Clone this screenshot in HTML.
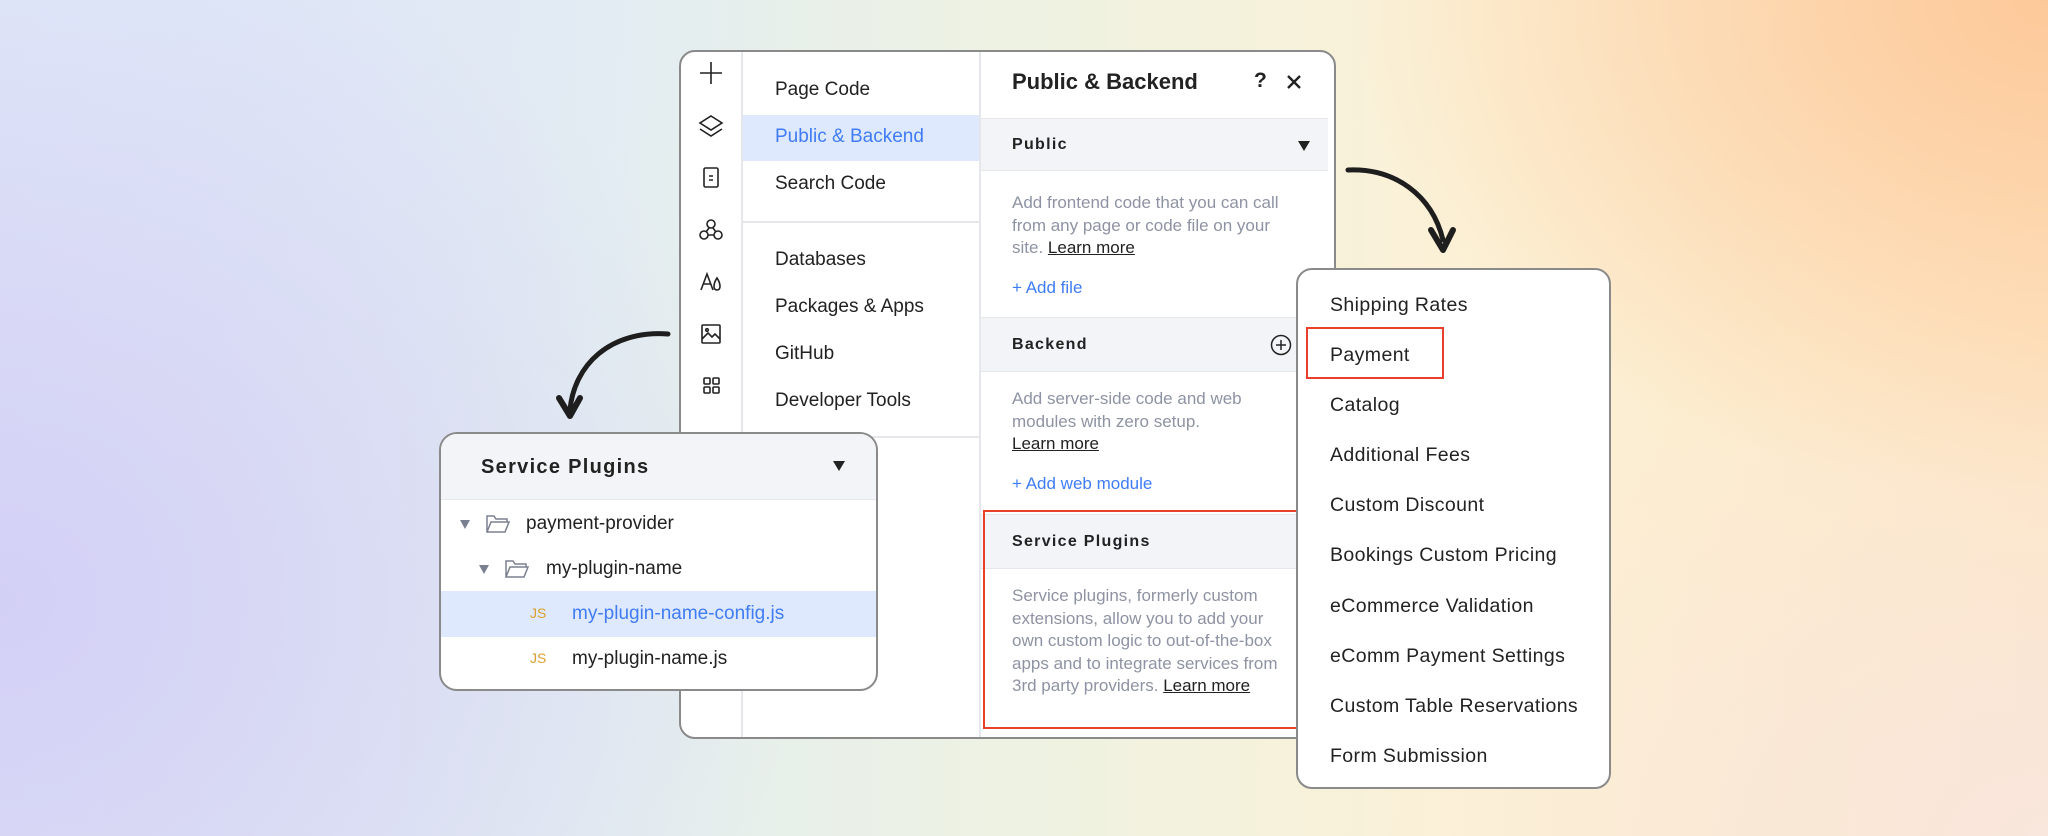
<!DOCTYPE html>
<html><head><meta charset="utf-8"><style>
*{margin:0;padding:0;box-sizing:border-box}
body{width:2048px;height:836px;overflow:hidden;position:relative;font-family:"Liberation Sans",sans-serif;
background:
radial-gradient(ellipse 700px 500px at 2048px 0px,#fdc99a 0%,rgba(253,205,160,0) 100%),
radial-gradient(ellipse 800px 700px at 0px 600px,#d3d0f6 0%,rgba(211,208,246,0) 100%),
radial-gradient(ellipse 700px 500px at 100px 0px,#dfe7f8 0%,rgba(223,231,248,0) 100%),
radial-gradient(ellipse 700px 500px at 2048px 836px,#f9e6dc 0%,rgba(249,230,220,0) 100%),
linear-gradient(90deg,#dfe3f4 0%,#e4eef0 30%,#eef2e2 50%,#fcf1d6 72%,#fde7c6 100%);}
.a{position:absolute}
.panel{position:absolute;background:#fff;border:2px solid #8a8a8a;border-radius:16px;overflow:hidden}
.nav{position:absolute;left:94px;font-size:19px;color:#222}
.t{position:absolute;font-size:17px;color:#8e93a3;line-height:22.5px}
.u{color:#222;text-decoration:underline}
.blue{color:#3f7cf5}
.band{position:absolute;background:#f3f4f7;border-top:1.5px solid #e6e7ec;border-bottom:1.5px solid #e6e7ec}
.bh{position:absolute;font-weight:bold;font-size:16px;letter-spacing:1.3px;color:#222}
.tri{position:absolute;width:0;height:0;border-left:6px solid transparent;border-right:6px solid transparent;border-top:10px solid #222}
.li{position:absolute;left:32px;font-size:19.5px;color:#222;letter-spacing:0.4px}
</style></head><body>

<div class="panel" style="left:679px;top:50px;width:657px;height:689px">
  <div class="a" style="left:60px;top:0;width:1.5px;height:689px;background:#e6e7ec"></div>
  <div class="a" style="left:298px;top:0;width:1.5px;height:689px;background:#e6e7ec"></div>
  <svg class="a" style="left:14px;top:6px" width="32" height="400" viewBox="0 0 32 400" fill="none" stroke="#222" stroke-width="1.6">
    <path d="M16 4v22M5 15h22"/>
    <path d="M16 58l11 7-11 7-11-7z M5 71l11 7 11-7"/>
    <rect x="9" y="110" width="14" height="19" rx="1.5"/><path d="M14 118h4M14 122h4"/>
    <circle cx="16" cy="166" r="4"/><circle cx="9" cy="177" r="4"/><circle cx="23" cy="177" r="4"/><path d="M14 170l-3 4M18 170l3 4M13 177h6"/>
    <path d="M6 232l6-16 6 16M8 226h8M22 220c-4 6-4 12 0 12s4-6 0-12z"/>
    <rect x="7" y="267" width="18" height="18" rx="1"/><path d="M7 281l6-6 4 4 3-3 5 5"/><circle cx="12" cy="272" r="1.3"/>
    <rect x="9" y="320" width="6" height="6" rx="1"/><rect x="18" y="320" width="6" height="6" rx="1"/><rect x="9" y="329" width="6" height="6" rx="1"/><rect x="18" y="329" width="6" height="6" rx="1"/>
    <rect x="9" y="375" width="15" height="14" rx="1"/>
  </svg>
  <div class="a" style="left:62px;top:63px;width:236px;height:46px;background:#dfe9fd"></div>
  <div class="nav" style="top:27px">Page Code</div>
  <div class="nav blue" style="top:74px">Public &amp; Backend</div>
  <div class="nav" style="top:121px">Search Code</div>
  <div class="a" style="left:62px;top:169px;width:236px;height:1.5px;background:#e6e7ec"></div>
  <div class="nav" style="top:197px">Databases</div>
  <div class="nav" style="top:244px">Packages &amp; Apps</div>
  <div class="nav" style="top:291px">GitHub</div>
  <div class="nav" style="top:338px">Developer Tools</div>
  <div class="a" style="left:62px;top:384px;width:236px;height:1.5px;background:#e6e7ec"></div>
  <div class="a" style="left:331px;top:17px;font-size:22px;font-weight:bold;color:#222">Public &amp; Backend</div>
  <div class="a" style="left:573px;top:17px;font-size:21px;font-weight:bold;color:#222">?</div>
  <svg class="a" style="left:605px;top:22px" width="16" height="16"><path d="M2 2l12 12M14 2L2 14" stroke="#222" stroke-width="2.4"/></svg>
  <div class="band" style="left:300px;top:66px;width:347px;height:53px"></div>
  <div class="bh" style="left:331px;top:84px">Public</div>
  <div class="tri" style="left:617px;top:89px"></div>
  <div class="t" style="left:331px;top:140px">Add frontend code that you can call<br>from any page or code file on your<br>site. <span class="u">Learn more</span></div>
  <div class="t blue" style="left:331px;top:225px;font-size:17px">+ Add file</div>
  <div class="band" style="left:300px;top:265px;width:347px;height:55px"></div>
  <div class="bh" style="left:331px;top:284px">Backend</div>
  <svg class="a" style="left:588px;top:281px" width="24" height="24"><circle cx="12" cy="12" r="9.5" fill="none" stroke="#222" stroke-width="1.5"/><path d="M12 7v10M7 12h10" stroke="#222" stroke-width="1.5"/></svg>
  <div class="t" style="left:331px;top:336px">Add server-side code and web<br>modules with zero setup.<br><span class="u">Learn more</span></div>
  <div class="t blue" style="left:331px;top:421px">+ Add web module</div>
  <div class="band" style="left:300px;top:462px;width:347px;height:55px"></div>
  <div class="bh" style="left:331px;top:481px">Service Plugins</div>
  <div class="t" style="left:331px;top:533px">Service plugins, formerly custom<br>extensions, allow you to add your<br>own custom logic to out-of-the-box<br>apps and to integrate services from<br>3rd party providers. <span class="u">Learn more</span></div>
  <div class="a" style="left:302px;top:458px;width:360px;height:219px;border:2.5px solid #e8402a"></div>
</div>

<svg class="a" style="left:0;top:0" width="2048" height="836" fill="none" stroke="#1e1e1e" stroke-width="5" stroke-linecap="round" stroke-linejoin="round">
  <path d="M1348 170C1395 168 1432 195 1443 240"/>
  <path d="M1431 230L1443 250L1453 230" stroke-width="6"/>
  <path d="M668 334C610 330 574 365 570 410"/>
  <path d="M559 398L570 416L580 398" stroke-width="6"/>
</svg>

<div class="panel" style="left:439px;top:432px;width:439px;height:259px;border-radius:18px">
  <div class="a" style="left:0;top:0;width:439px;height:66px;background:#f3f4f7;border-bottom:1.5px solid #e6e7ec"></div>
  <div class="a" style="left:40px;top:22px;font-weight:bold;font-size:20px;letter-spacing:1.3px;color:#222">Service Plugins</div>
  <div class="tri" style="left:392px;top:27px"></div>
  <div class="tri" style="left:19px;top:86px;border-top-color:#7b8090;border-left-width:5px;border-right-width:5px;border-top-width:9px"></div>
  <svg class="a" style="left:44px;top:79px" width="26" height="22" fill="none" stroke="#7b8090" stroke-width="1.5"><path d="M2 19V3h7l2 3h11v3M2 19l4-10h18l-4 10z"/></svg>
  <div class="a" style="left:85px;top:79px;font-size:19px;color:#222">payment-provider</div>
  <div class="tri" style="left:38px;top:131px;border-top-color:#7b8090;border-left-width:5px;border-right-width:5px;border-top-width:9px"></div>
  <svg class="a" style="left:63px;top:124px" width="26" height="22" fill="none" stroke="#7b8090" stroke-width="1.5"><path d="M2 19V3h7l2 3h11v3M2 19l4-10h18l-4 10z"/></svg>
  <div class="a" style="left:105px;top:124px;font-size:19px;color:#222">my-plugin-name</div>
  <div class="a" style="left:0;top:157px;width:439px;height:46px;background:#dfe9fd"></div>
  <div class="a" style="left:89px;top:171px;font-size:14px;color:#d9a030">JS</div>
  <div class="a" style="left:131px;top:169px;font-size:19px;color:#3f7cf5">my-plugin-name-config.js</div>
  <div class="a" style="left:89px;top:216px;font-size:14px;color:#d9a030">JS</div>
  <div class="a" style="left:131px;top:214px;font-size:19px;color:#222">my-plugin-name.js</div>
</div>

<div class="panel" style="left:1296px;top:268px;width:315px;height:521px;border-radius:16px">
  <div class="li" style="top:24px">Shipping Rates</div>
  <div class="li" style="top:74px">Payment</div>
  <div class="a" style="left:8px;top:57px;width:138px;height:52px;border:2.5px solid #e8402a"></div>
  <div class="li" style="top:124px">Catalog</div>
  <div class="li" style="top:174px">Additional Fees</div>
  <div class="li" style="top:224px">Custom Discount</div>
  <div class="li" style="top:274px">Bookings Custom Pricing</div>
  <div class="li" style="top:325px">eCommerce Validation</div>
  <div class="li" style="top:375px">eComm Payment Settings</div>
  <div class="li" style="top:425px">Custom Table Reservations</div>
  <div class="li" style="top:475px">Form Submission</div>
</div>
</body></html>
